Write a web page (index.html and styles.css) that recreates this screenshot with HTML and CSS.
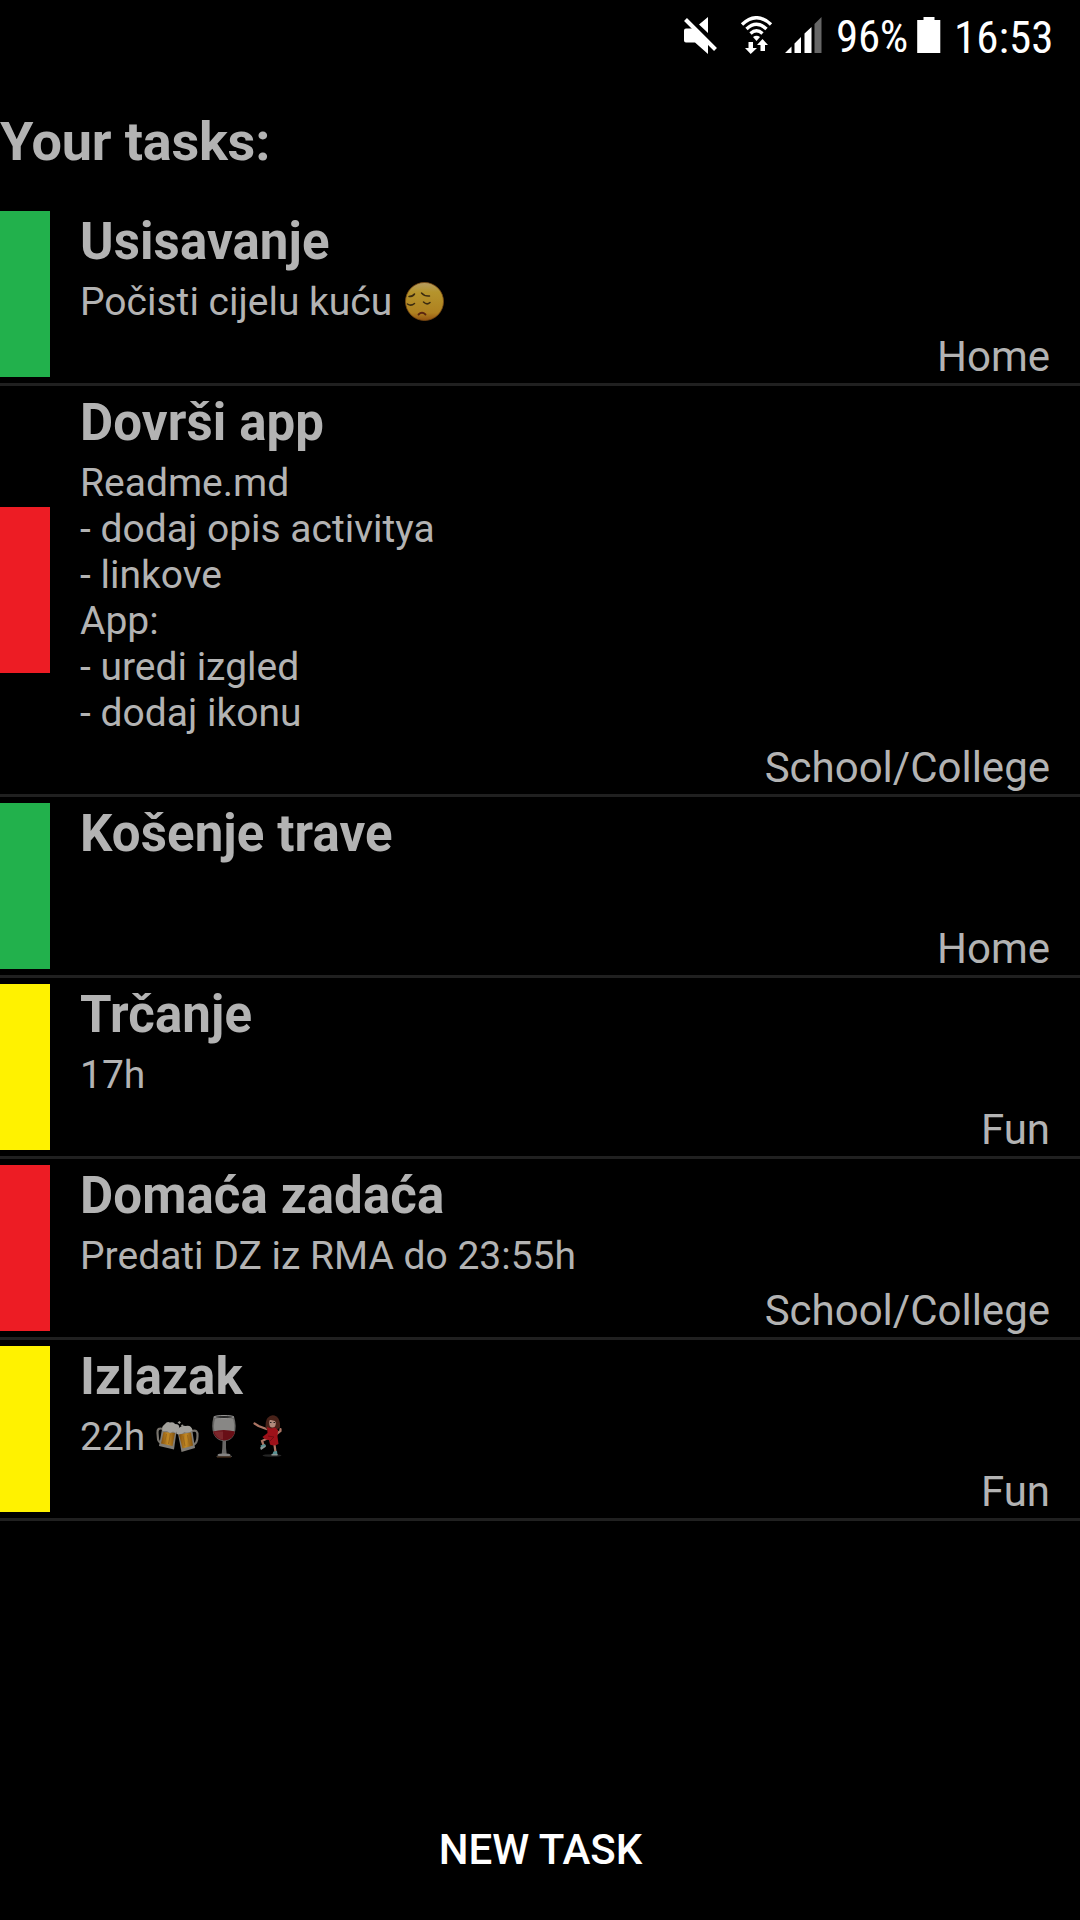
FILE: index.html
```html
<!DOCTYPE html>
<html lang="hr">
<head>
<meta charset="utf-8">
<title>Your tasks</title>
<link rel="stylesheet" href="styles.css">
</head>
<body>
<div class="screen">
  <header class="status">
    <svg class="mute" width="34" height="37" viewBox="0 0 34 37">
      <path fill="#fff" d="M2 11.500h8.500L24 25v12L11 25.500H2q-2 0-2-2v-10q0-2 2-2zM15 7.500L24 0v16z"/>
      <path stroke="#fff" stroke-width="4" d="M1.500 2.500L31.500 32.500"/>
    </svg>
    <svg class="wifi" width="34" height="38" viewBox="0 0 34 38">
      <g fill="none" stroke="#fff" stroke-width="3.400">
        <path d="M2 8.500Q16.500-5 31 8.500"/>
        <path d="M6.500 13Q16.500 3.500 26.500 13"/>
        <path d="M10.500 17.500Q16.500 12 22.500 17.500"/>
      </g>
      <path fill="#fff" d="M13 21q3.500-2.500 7 0l-3.500 4zM8.500 26h4.500v6h4L10.700 38 5 32h3.500zM20.500 35v-6H17l5.500-6 5.500 6h-3v6z"/>
    </svg>
    <svg class="signal" width="38" height="37" viewBox="0 0 38 37">
      <path fill="#fff" d="M0 36l6.500-6.500V36zM9.500 36V26.500l6.500-6.500v16zM19.500 36V16.500l7-6.500v26z"/>
      <path fill="#666" d="M29.500 36V7L36.500 0v36z"/>
    </svg>
    <span class="percent">96%</span>
    <svg class="battery" width="24" height="37" viewBox="0 0 24 37"><path fill="#fff" d="M6.500 0h11v3H23.300v33H.2V3h6.300z"/></svg>
    <span class="clock">16:53</span>
  </header>

  <h1 class="heading">Your tasks:</h1>

  <ul class="tasks">
    <li class="task">
      <span class="priority low"></span>
      <div class="body">
        <h2 class="title">Usisavanje</h2>
        <p class="desc">Počisti cijelu kuću <svg class="emoji" viewBox="0 0 46 46">
          <defs>
            <linearGradient id="skin" x1="0" y1="0" x2="0" y2="1"><stop offset="0" stop-color="#b69d63"/><stop offset=".25" stop-color="#b5942c"/><stop offset=".8" stop-color="#af8120"/><stop offset="1" stop-color="#935210"/></linearGradient>
          </defs>
          <circle cx="23.500" cy="22.500" r="19" fill="url(#skin)" stroke="#7c4b13" stroke-width=".8"/>
          <g fill="none" stroke="#3b2b10" stroke-width="1.500" stroke-linecap="round">
            <path d="M8 17.500q4 0 5.500-2.500M20.500 14q3 3.500 8 3M6.500 25q3.500 2.500 7-.5M22.500 23q3.500 3.500 6.500.5"/>
            <path stroke="#5a2410" stroke-width="1.800" d="M17.500 35.500q3.500-3.500 7 0"/>
          </g>
        </svg></p>
        <p class="category">Home</p>
      </div>
    </li>
    <li class="task">
      <span class="priority high"></span>
      <div class="body">
        <h2 class="title">Dovrši app</h2>
        <p class="desc">Readme.md
- dodaj opis activitya
- linkove
App:
- uredi izgled
- dodaj ikonu</p>
        <p class="category">School/College</p>
      </div>
    </li>
    <li class="task">
      <span class="priority low"></span>
      <div class="body">
        <h2 class="title">Košenje trave</h2>
        <p class="desc"></p>
        <p class="category">Home</p>
      </div>
    </li>
    <li class="task">
      <span class="priority medium"></span>
      <div class="body">
        <h2 class="title">Trčanje</h2>
        <p class="desc">17h</p>
        <p class="category">Fun</p>
      </div>
    </li>
    <li class="task">
      <span class="priority high"></span>
      <div class="body">
        <h2 class="title">Domaća zadaća</h2>
        <p class="desc">Predati DZ iz RMA do 23:55h</p>
        <p class="category">School/College</p>
      </div>
    </li>
    <li class="task">
      <span class="priority medium"></span>
      <div class="body">
        <h2 class="title">Izlazak</h2>
        <p class="desc">22h <svg class="emoji" viewBox="0 0 46 46">
          <defs>
            <linearGradient id="beer"><stop offset="0" stop-color="#84500c"/><stop offset=".5" stop-color="#c38a25"/><stop offset="1" stop-color="#80500e"/></linearGradient>
          </defs>
          <g fill="none" stroke="#77736c" stroke-width="2.200">
            <path d="M9 15Q3 13 3.500 19L4 25q.5 4 4.500 3"/>
            <path d="M38 17q6-2 5.500 5 0 8-5 9"/>
          </g>
          <path fill="#817d76" d="M8.500 12.500L23 14l-3 21.500L5 32z"/>
          <path fill="url(#beer)" d="M9.500 18l11.500 1-2.500 13L7 29.500z"/>
          <path stroke="#9a681c" d="M12.500 20l-2 9M16.500 20l-2 10"/>
          <path fill="#817d76" d="M23.500 17L38 14.500 41 34l-13.500 4z"/>
          <path fill="url(#beer)" d="M25 20.500L37 18.500l2 13-10.500 3z"/>
          <path stroke="#9a681c" d="M29 22l2 10M33.500 21l2 9.500"/>
          <path fill="#a3a19c" d="M8.500 17q-1-5 2.500-7 2-3 5-1.500 4-1 5 1.500 5 0 4 4l-3 5-3-1.500-3 1.500-3-2z"/>
          <path fill="#a3a19c" d="M22.500 20q-1-5 3-6.500 3-2.500 6-1.500 6-1.500 7 4.500-4 3-8 1.500-3 3-8 2z"/>
          <path fill="#97958e" d="M23.500 8.500l2-1.500 1.500 1.500-1.500 1.500zM27 11l2-.5.500 1.500-2 .5z"/>
        </svg><svg class="emoji" viewBox="0 0 46 46">
          <path fill="#686765" d="M13.500 2.500Q11 13 13.500 20q3 6 9 7 0 7-.8 13l-5 2v1h15v-1l-5-2q-1-6-.7-13 6-1 8.500-7 2.500-8-.500-17.500z"/>
          <path fill="#888785" d="M15 5q-2 7-.500 12H34q.8-7-.700-12z"/>
          <path fill="#680f16" d="M13 17.500Q23.500 14.500 35 17.500q-1.500 8.500-11 9-9-1-11-9z"/>
          <path fill="#8a3b3e" opacity=".55" d="M14 17.500h9v8q-7-1-9-8z"/>
          <ellipse cx="24" cy="3" rx="10" ry="1.500" fill="#252525" stroke="#969594"/>
          <ellipse cx="24" cy="41" rx="6.500" ry="1.600" fill="#858483"/>
          <path stroke="#3a2415" stroke-width="1.500" d="M17 43h14"/>
        </svg><svg class="emoji" viewBox="0 0 46 46">
          <ellipse cx="26" cy="41.500" rx="9.500" ry="1.300" fill="#242424"/>
          <path fill="none" stroke="#ac7564" stroke-width="2.200" stroke-linecap="round" d="M8.500 9.500l4 2.500 8 3M30.500 20l4-3v-2M22 24l-6 3 1.500 4M28.500 31l1 7"/>
          <path fill="#482219" d="M19.500 13.500q0-7 2-9.500 4-4.500 9-1.500 4 3 3.500 11l-3 2H21z"/>
          <ellipse cx="26.500" cy="9" rx="3.300" ry="4.500" fill="#b1897b"/>
          <path fill="#482219" d="M23 6q3-3.500 7-2.500l2 8.500-3-5-4-1z"/>
          <path stroke="#252020" d="M24 8.500h1.500M27.500 8.500H29"/>
          <path fill="#9d1119" d="M21 13l4 1.500 4-1 3 2.500-.5 6.500 1 7.500q-4 2.500-8.500.5l-1-4.500q-4 0-6.500-3l5-4z"/>
          <path fill="none" stroke="#720b12" d="M22 22l6 1-4 4"/>
          <path fill="#579092" d="M14.500 31.500l4.500-1.500 1 2-4.500 3zM27.500 37.500l3.500-.5.500 4H26z"/>
          <path fill="#8b9694" d="M14 33.500l6-2-.5 1.500-4.500 3zM25.500 40h6v1.500h-6z"/>
        </svg></p>
        <p class="category">Fun</p>
      </div>
    </li>
  </ul>

  <button class="new-task" type="button">NEW TASK</button>
</div>
</body>
</html>
```
FILE: styles.css
```css
* {
  box-sizing: border-box;
}

body {
  margin: 0;
  background: #000;
  color: #b3b3b3;
  font-family: Roboto, sans-serif;
}

.screen {
  width: 1080px;
  height: 1920px;
  display: flex;
  flex-direction: column;
  overflow: hidden;
}

h1, h2, p, ul {
  margin: 0;
  padding: 0;
}

.status {
  height: 72px;
  padding: 16px 27px 0 0;
  display: flex;
  justify-content: flex-end;
  align-items: flex-start;
  color: #fff;
  font-size: 45px;
  line-height: 42px;
}

.status svg {
  flex: none;
}

.mute, .signal, .battery {
  margin-top: 1px;
}

.wifi {
  margin-left: 22px;
}

.signal {
  margin-left: 11px;
}

.percent, .clock {
  font-family: "Roboto Condensed", Roboto, sans-serif;
  font-stretch: condensed;
  font-weight: 400;
}

.percent {
  width: 71px;
  margin: 0 10px 0 13px;
  letter-spacing: -0.3px;
}

.clock {
  width: 99px;
  margin-left: 13px;
  line-height: 43px;
}

.heading {
  height: 133px;
  padding-top: 38px;
  font-size: 54px;
  line-height: 63px;
  font-weight: 700;
  letter-spacing: -0.2px;
}

.tasks {
  list-style: none;
}

.task {
  display: flex;
  align-items: center;
  border-bottom: 3px solid #202020;
}

.priority {
  width: 50px;
  height: 166px;
  flex: none;
}

.low {
  background: #22b14c;
}

.medium {
  background: #fff200;
}

.high {
  background: #ed1c24;
}

.body {
  flex: 1;
  padding: 7px 30px 2px;
}

.title {
  margin-bottom: 7px;
  font-size: 51px;
  line-height: 60px;
  font-weight: 700;
  letter-spacing: 0.1px;
}

.desc {
  min-height: 46px;
  margin-bottom: 7px;
  font-size: 39px;
  line-height: 46px;
  white-space: pre-wrap;
}

.emoji {
  width: 46px;
  height: 46px;
  vertical-align: top;
}

.emoji:first-child {
  margin-left: -1px;
}

.category {
  font-size: 42px;
  line-height: 49px;
  text-align: right;
}

.new-task {
  height: 144px;
  margin-top: auto;
  padding: 2px 0 0 1px;
  border: 0;
  background: none;
  color: #fff;
  font: 500 42px/49px Roboto, sans-serif;
}
```
